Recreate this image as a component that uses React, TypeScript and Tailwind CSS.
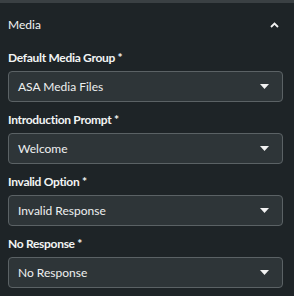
import { useState } from "react";

type Field = {
  label: string;
  value: string;
};

const fields: Field[] = [
  { label: "Default Media Group *", value: "ASA Media Files" },
  { label: "Introduction Prompt *", value: "Welcome" },
  { label: "Invalid Option *", value: "Invalid Response" },
  { label: "No Response *", value: "No Response" },
];

function SelectBox({ value }: { value: string }) {
  return (
    <button className="flex h-[31px] w-full items-center justify-between rounded-[4px] border border-[#5b6265] bg-[#2e3538] pl-[9px] pr-[13px] text-left">
      <span className="text-[12px] leading-5 text-[#eef0f0]">{value}</span>
      <svg width="9" height="5" viewBox="0 0 9 5" className="fill-[#f2f2f2]">
        <path d="M0 0 H9 L4.5 5 Z" />
      </svg>
    </button>
  );
}

function App() {
  const [open, setOpen] = useState(true);

  return (
    <div
      className="min-h-screen w-full bg-[#1e2427] text-white"
      style={{ fontFamily: "Lato, 'Open Sans', sans-serif" }}
    >
      <div className="h-[3px] bg-[#3a4043]" />

      {/* Cabeçalho da seção */}
      <div
        className="flex h-[47px] cursor-pointer items-start justify-between pl-2 pr-[15px] pt-[12px]"
        onClick={() => setOpen(!open)}
      >
        <span className="text-[12px] leading-5 text-[#f2f4f4]">Media</span>
        <svg width="9" height="6" viewBox="0 0 9 6" className="mt-[7px]">
          <path
            d="M1 5 L4.5 1.5 L8 5"
            fill="none"
            stroke="#f2f2f2"
            strokeWidth="1.8"
          />
        </svg>
      </div>

      {open && (
        <div className="flex w-[283px] flex-col gap-[10px] pl-2">
          {fields.map((f) => (
            <div key={f.label} className="flex flex-col gap-[5px]">
              <label className="text-[12px] font-bold leading-4 tracking-[-0.3px] text-[#f2f4f4]">
                {f.label}
              </label>
              <SelectBox value={f.value} />
            </div>
          ))}
        </div>
      )}
    </div>
  );
}

export default App;
